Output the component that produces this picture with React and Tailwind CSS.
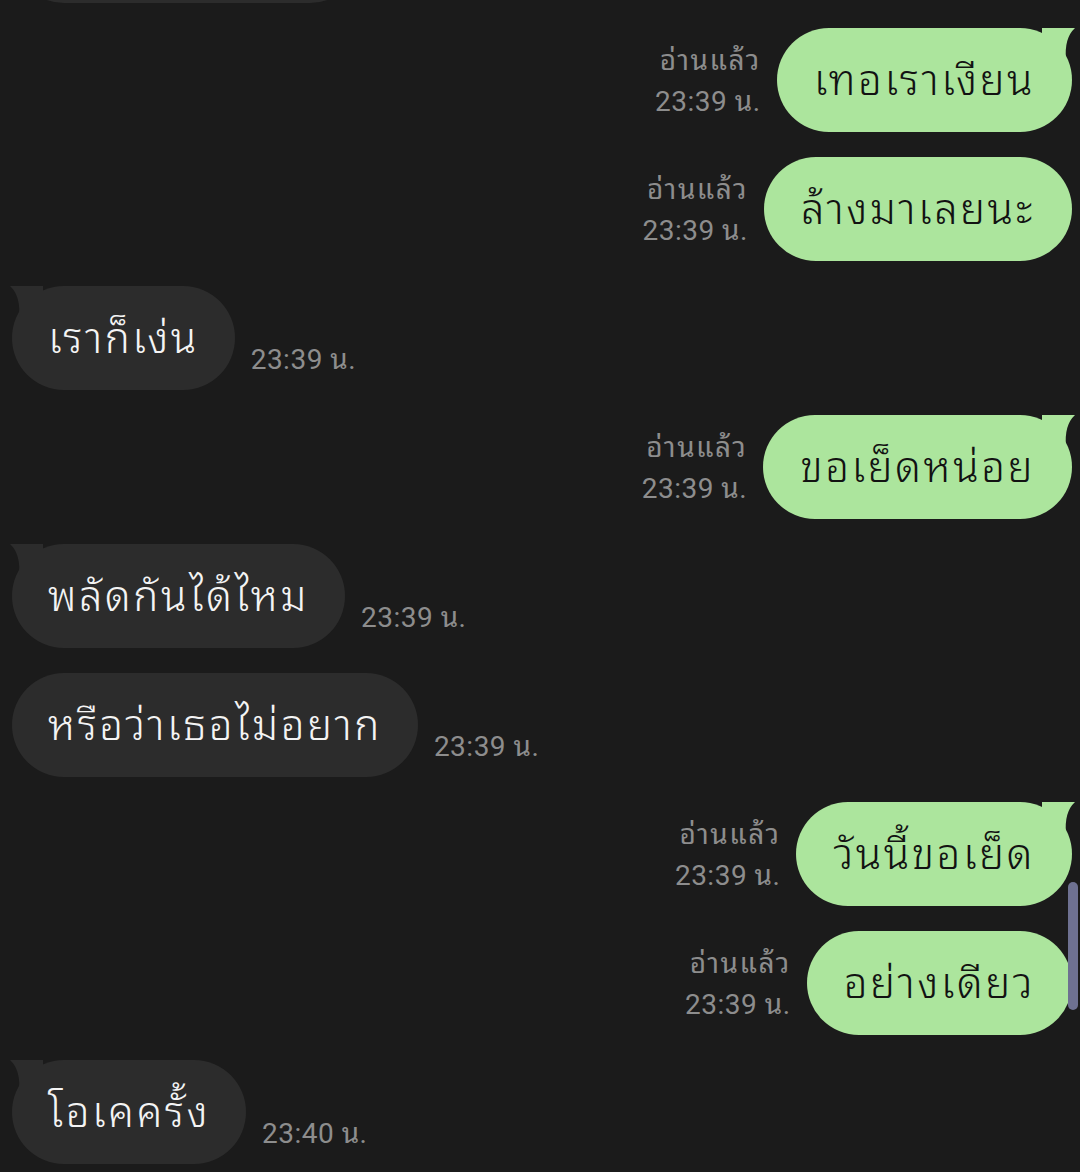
import React from "react";

const messages = [
  { side: "out", text: "เทอเราเงียน", tail: true },
  { side: "out", text: "ล้างมาเลยนะ" },
  { side: "in", text: "เราก็เง่น", tail: true },
  { side: "out", text: "ขอเย็ดหน่อย", tail: true },
  { side: "in", text: "พลัดกันได้ไหม", tail: true },
  { side: "in", text: "หรือว่าเธอไม่อยาก" },
  { side: "out", text: "วันนี้ขอเย็ด", tail: true },
  { side: "out", text: "อย่างเดียว" },
  { side: "in", text: "โอเคครั้ง", tail: true, time: "23:40 น." },
];

const OutTail = () => (
  <svg
    className="absolute top-0 right-[-3px]"
    width="36"
    height="32"
    viewBox="0 0 36 32"
  >
    <path d="M3 0 H36 Q25 10 27 32 H3 Z" fill="#ace59d" />
  </svg>
);

const InTail = () => (
  <svg
    className="absolute top-0 left-[-2px]"
    width="36"
    height="32"
    viewBox="0 0 36 32"
  >
    <path d="M33 0 H0 Q11 10 9 32 H33 Z" fill="#2c2c2c" />
  </svg>
);

const Outgoing = ({ text, tail, time = "23:39 น." }) => (
  <div className="flex justify-end items-end gap-[16px] pr-[8px]">
    <div className="flex flex-col items-end pb-[10px] text-[28px] leading-[41px] text-[#8d8d8d]">
      <span className="tracking-[1.5px]">อ่านแล้ว</span>
      <span className="tracking-[0.5px]">{time}</span>
    </div>
    <div className="relative h-[104px] rounded-full bg-[#ace59d] px-[37px] flex items-center text-[42px] font-[350] tracking-[2.5px] text-[#121212]">
      {tail && <OutTail />}
      <span className="relative">{text}</span>
    </div>
  </div>
);

const Incoming = ({ text, tail, time = "23:39 น." }) => (
  <div className="flex items-end gap-[16px] pl-[12px]">
    <div className="relative h-[104px] rounded-full bg-[#2c2c2c] px-[36px] flex items-center text-[42px] font-[350] tracking-[2.5px] text-[#f4f4f4]">
      {tail && <InTail />}
      <span className="relative">{text}</span>
    </div>
    <div className="pb-[10px] text-[28px] leading-[41px] tracking-[0.5px] text-[#8d8d8d]">
      {time}
    </div>
  </div>
);

export default function App() {
  return (
    <main
      className="relative h-[1172px] w-full overflow-hidden bg-[#1b1b1b]"
      style={{
        fontFamily:
          'Roboto, "Noto Sans Thai Looped", Garuda, Loma, "Tlwg Typo", "Noto Sans Thai", sans-serif',
      }}
    >
      <div className="flex flex-col gap-[25px]">
        {/* partial bubble cut off at the top */}
        <div className="pl-[12px]">
          <div className="mt-[-101px] h-[104px] w-[350px] rounded-full bg-[#2c2c2c]" />
        </div>

        {messages.map((m, i) =>
          m.side === "out" ? (
            <Outgoing key={i} {...m} />
          ) : (
            <Incoming key={i} {...m} />
          )
        )}
      </div>

      {/* scrollbar */}
      <div className="absolute right-[2px] top-[882px] h-[128px] w-[10px] rounded-full bg-[#6e7191]" />
    </main>
  );
}
